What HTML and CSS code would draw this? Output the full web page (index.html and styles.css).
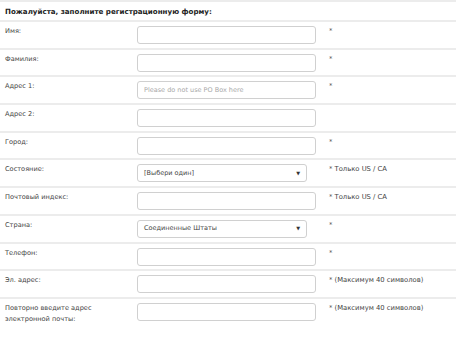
FILE: index.html
```html
<!DOCTYPE html>
<html lang="ru">
<head>
	<meta charset="UTF-8">
	<title>Регистрация</title>
	<link rel="stylesheet" href="styles.css">
</head>
<body>
	<div id="reg">
		<div class="head">Пожалуйста, заполните регистрационную форму:</div>
		<div class="row">
			<label>Имя:</label>
			<div class="field"><input type="text"></div>
			<div class="note">*</div>
		</div>
		<div class="row">
			<label>Фамилия:</label>
			<div class="field"><input type="text"></div>
			<div class="note">*</div>
		</div>
		<div class="row">
			<label>Адрес 1:</label>
			<div class="field"><input type="text" placeholder="Please do not use PO Box here"></div>
			<div class="note">*</div>
		</div>
		<div class="row">
			<label>Адрес 2:</label>
			<div class="field"><input type="text"></div>
			<div class="note"></div>
		</div>
		<div class="row">
			<label>Город:</label>
			<div class="field"><input type="text"></div>
			<div class="note">*</div>
		</div>
		<div class="row">
			<label>Состояние:</label>
			<div class="field"><div class="select"><span>[Выбери один]</span><i>&#9660;</i></div></div>
			<div class="note">* Только US / CA</div>
		</div>
		<div class="row">
			<label>Почтовый индекс:</label>
			<div class="field"><input type="text"></div>
			<div class="note">* Только US / CA</div>
		</div>
		<div class="row">
			<label>Страна:</label>
			<div class="field"><div class="select"><span>Соединенные Штаты</span><i>&#9660;</i></div></div>
			<div class="note">*</div>
		</div>
		<div class="row">
			<label>Телефон:</label>
			<div class="field"><input type="text"></div>
			<div class="note">*</div>
		</div>
		<div class="row">
			<label>Эл. адрес:</label>
			<div class="field"><input type="text"></div>
			<div class="note">* (Максимум 40 символов)</div>
		</div>
		<div class="row">
			<label>Повторно введите адрес электронной почты:</label>
			<div class="field"><input type="text"></div>
			<div class="note">* (Максимум 40 символов)</div>
		</div>
	</div>
</body>
</html>
```
FILE: styles.css
```css
*{
	margin: 0;
	padding: 0;
	box-sizing: border-box;
}
body{
	background: #fff;
	font-family: "DejaVu Sans", Verdana, sans-serif;
	font-size: 6.6px;
	color: #444;
}
#reg{
	width: 456px;
}
.head{
	height: 20px;
	border-top: 2px solid #ececec;
	padding: 4px 0 0 5px;
	font-size: 7.1px;
	font-weight: bold;
	color: #222;
	line-height: 12px;
}
.row{
	display: grid;
	grid-template-columns: 137px 192px 1fr;
	height: 27.7px;
	border-top: 2px solid #ececec;
	padding-top: 4px;
	line-height: 11px;
}
.row label{
	padding-left: 5px;
	padding-right: 10px;
	color: #444;
}
.field input,
.select{
	width: 179px;
	height: 18px;
	border: 1px solid #d0d0d0;
	border-radius: 3px;
	background: #fff;
	font-family: inherit;
	font-size: 6.5px;
	color: #444;
	padding: 0 6px;
	outline: none;
}
.field input::placeholder{
	color: #a8a8a8;
}
.select{
	width: 170px;
	display: flex;
	align-items: center;
	justify-content: space-between;
}
.select i{
	font-style: normal;
	font-size: 5px;
	color: #333;
}
.note{
	font-size: 6.8px;
	color: #444;
}
```
